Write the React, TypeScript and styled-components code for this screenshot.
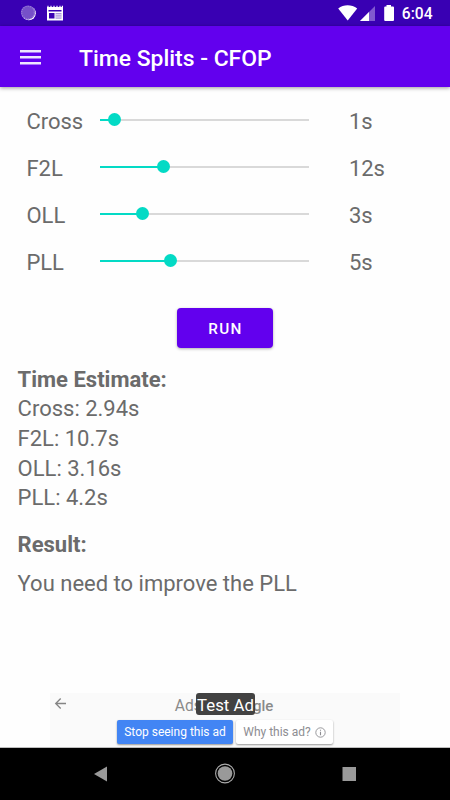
import React from 'react';
import styled, { createGlobalStyle } from 'styled-components';

const GlobalStyle = createGlobalStyle`
  *, *::before, *::after { box-sizing: border-box; }
  body { margin: 0; background: #fff; }
`;

const Screen = styled.div`
  width: 450px;
  height: 800px;
  display: flex;
  flex-direction: column;
  overflow: hidden;
  background: #fefefe;
  color: #6b6b6b;
  font-family: Roboto, "Liberation Sans", sans-serif;
`;

const StatusBar = styled.div`
  flex: none;
  height: 26px;
  display: flex;
  align-items: center;
  justify-content: space-between;
  padding: 0 17.5px 0 20px;
  background: #3900b3;
  color: #fff;
`;

const StatusGroup = styled.div`
  display: flex;
  align-items: center;
  svg { display: block; }
`;

const Clock = styled.span`
  margin-left: 7px;
  font-size: 15.6px;
  font-weight: 500;
  line-height: 26px;
  padding-top: 2px;
`;

const AppBar = styled.header`
  flex: none;
  height: 61px;
  display: flex;
  align-items: center;
  padding: 2px 20px 0;
  background: #6200ee;
  color: #fff;
  box-shadow: 0 1px 4px rgba(0, 0, 0, 0.4);
`;

const MenuButton = styled.button`
  width: 21px;
  height: 16px;
  margin-bottom: 2px;
  padding: 0;
  border: 0;
  background: none;
  svg { display: block; }
`;

const Title = styled.h1`
  margin: 2px 0 0 38px;
  font-size: 22.9px;
  line-height: 28px;
  font-weight: 500;
`;

const Content = styled.main`
  flex: 1;
  display: flex;
  flex-direction: column;
  padding-top: 9px;
`;

const SliderRow = styled.div`
  height: 47px;
  display: grid;
  grid-template-columns: 74px 209px 1fr;
  align-items: center;
  padding-left: 26.4px;
  font-size: 22px;
  line-height: 26px;
`;

const RowText = styled.span<{ $indent?: number }>`
  padding-left: ${(p) => p.$indent ?? 0}px;
  padding-top: 4px;
`;

const Track = styled.div`
  height: 13px;
  display: flex;
  align-items: center;
`;

const Filled = styled.div`
  flex: none;
  height: 2px;
  background: #03dac5;
`;

const Thumb = styled.div`
  flex: none;
  z-index: 1;
  width: 13px;
  height: 13px;
  margin: 0 -6.5px;
  border-radius: 50%;
  background: #03dac5;
`;

const Rest = styled.div`
  flex: 1;
  height: 2px;
  background: #d9d9d9;
`;

const RunButton = styled.button`
  align-self: center;
  width: 96px;
  height: 40px;
  margin-top: 24px;
  padding: 2px 0 0 1px;
  border: 0;
  border-radius: 4px;
  background: #6200ee;
  color: #fff;
  font: 500 15.3px/20px Roboto, sans-serif;
  letter-spacing: 1.37px;
  box-shadow: 0 1px 3px rgba(0, 0, 0, 0.32);
`;

const Report = styled.section`
  padding: 16.8px 17.6px 0;
  font-size: 22px;
  line-height: 29.6px;
`;

const Heading = styled.h2<{ $top?: number }>`
  margin: ${(p) => p.$top ?? 0}px 0 0;
  font-size: 22px;
  line-height: 29.6px;
  font-weight: 700;
`;

const Line = styled.div<{ $top?: number }>`
  margin-top: ${(p) => p.$top ?? 0}px;
`;

const Ad = styled.aside`
  position: relative;
  flex: none;
  align-self: center;
  width: 350px;
  height: 54px;
  margin-top: auto;
  margin-bottom: 1px;
  background: #fafafa;
  color: #8a8a8a;
`;

const BackIcon = styled.svg`
  position: absolute;
  left: 4px;
  top: 4px;
`;

const AdTitle = styled.div`
  display: flex;
  justify-content: center;
  gap: 4px;
  height: 27px;
  padding: 1px 2px 0 0;
  font-size: 15.6px;
  line-height: 24px;
`;

const Brand = styled.span`
  font-size: 15px;
  font-weight: 500;
`;

const TestBadge = styled.div`
  position: absolute;
  left: 146px;
  top: 0;
  width: 59px;
  height: 22px;
  border-radius: 3px;
  background: #424242;
  color: #fff;
  font-size: 16.8px;
  line-height: 24px;
  text-align: center;
  white-space: nowrap;
`;

const AdActions = styled.div`
  display: flex;
  justify-content: center;
  gap: 3px;
`;

const AdButton = styled.button<{ $primary?: boolean }>`
  display: flex;
  align-items: center;
  justify-content: center;
  gap: 4px;
  width: ${(p) => (p.$primary ? 116 : 97)}px;
  height: 24px;
  padding: 0;
  border: 0;
  border-radius: 2px;
  background: ${(p) => (p.$primary ? '#4285f4' : '#fff')};
  color: ${(p) => (p.$primary ? '#fff' : '#8d8d92')};
  font: 400 12px/24px Roboto, sans-serif;
  white-space: nowrap;
  box-shadow: 0 1px 2px rgba(0, 0, 0, 0.4);
`;

const NavBar = styled.nav`
  flex: none;
  height: 52px;
  display: flex;
  justify-content: space-between;
  align-items: center;
  padding: 0 93px;
  background: #000;
  box-shadow: 0 -1px 0 #bdbdbd;
  svg { display: block; }
`;

const sliders = [
  { name: 'Cross', value: '1s', fill: 14 },
  { name: 'F2L', value: '12s', fill: 63 },
  { name: 'OLL', value: '3s', fill: 42 },
  { name: 'PLL', value: '5s', fill: 70 },
];

const estimates = ['Cross: 2.94s', 'F2L: 10.7s', 'OLL: 3.16s', 'PLL: 4.2s'];

export default function App() {
  return (
    <Screen>
      <GlobalStyle />
      <StatusBar>
        <StatusGroup>
          <svg width="44" height="26" viewBox="0 0 44 26">
            <circle cx="8.8" cy="13.3" r="7" fill="#fff" />
            <circle cx="8" cy="12.6" r="7.1" fill="#7650c9" />
            <circle cx="8" cy="12.6" r="6.3" fill="none" stroke="#9c80d8" strokeWidth="1.2" strokeDasharray="1 1.2" />
            <path d="M27 7H43V20.5H27Z" fill="#fff" />
            <path d="M28 5.8V8M31 5.8V8M34 5.8V8M37 5.8V8M40 5.8V8M42.4 5.8V8" stroke="#fff" strokeWidth="1.2" />
            <path d="M28.5 10H41.5V11.5H28.5ZM29 13H34.5V18.5H29Z" fill="#3900b3" />
            <path d="M35.5 13H41.5V18.7H35.5Z" fill="#a993dc" />
            <path d="M35.5 14.8H41.5M35.5 17H41.5" stroke="#fff" strokeWidth=".8" />
          </svg>
        </StatusGroup>
        <StatusGroup>
          <svg width="57" height="26" viewBox="0 0 57 26">
            <path d="M.2 8.4C5.7 4.1 13.5 4.1 19.2 8.4L9.7 20.5Z" fill="#fff" />
            <path d="M37 6V21H22Z" fill="#8059cf" />
            <path d="M31 12V21H22Z" fill="#fff" />
            <path d="M48.5 5H53V6.5H55Q56 6.5 56 7.5V20Q56 21 55 21H47.2Q46.2 21 46.2 20V7.5Q46.2 6.5 47.2 6.5H48.5Z" fill="#fff" />
          </svg>
          <Clock>6:04</Clock>
        </StatusGroup>
      </StatusBar>
      <AppBar>
        <MenuButton aria-label="Menu">
          <svg width="21" height="16" viewBox="0 0 21 16" fill="#eee5ff">
            <path d="M0 1H21V3.4H0ZM0 7H21V9.4H0ZM0 13H21V15.4H0Z" />
          </svg>
        </MenuButton>
        <Title>Time Splits - CFOP</Title>
      </AppBar>
      <Content>
        {sliders.map((s) => (
          <SliderRow key={s.name}>
            <RowText>{s.name}</RowText>
            <Track>
              <Filled style={{ width: s.fill }} />
              <Thumb />
              <Rest />
            </Track>
            <RowText $indent={39.5}>{s.value}</RowText>
          </SliderRow>
        ))}
        <RunButton>RUN</RunButton>
        <Report>
          <Heading>Time Estimate:</Heading>
          {estimates.map((e) => (
            <Line key={e}>{e}</Line>
          ))}
          <Heading $top={17.4}>Result:</Heading>
          <Line $top={9}>You need to improve the PLL</Line>
        </Report>
        <Ad>
          <BackIcon width="14" height="13" viewBox="0 0 14 13" fill="none" stroke="#858585" strokeWidth="1.3">
            <path d="M12 6.5H1.7M6.7 1.5L1.7 6.5L6.7 11.5" />
          </BackIcon>
          <AdTitle>
            <span>Ads by</span>
            <Brand>Google</Brand>
          </AdTitle>
          <AdActions>
            <AdButton $primary>Stop seeing this ad</AdButton>
            <AdButton>
              Why this ad?
              <svg width="11" height="11" viewBox="0 0 11 11" fill="none" stroke="#8d8d92">
                <circle cx="5.5" cy="5.5" r="4.7" strokeWidth=".9" />
                <path d="M5.5 4.8V8.2M5.5 2.7V3.8" strokeWidth="1.1" />
              </svg>
            </AdButton>
          </AdActions>
          <TestBadge>Test Ad</TestBadge>
        </Ad>
      </Content>
      <NavBar>
        <svg width="15" height="52" viewBox="0 0 15 52">
          <path d="M1 26L14 18.5V33.5Z" fill="#999" />
        </svg>
        <svg width="22" height="52" viewBox="0 0 22 52">
          <circle cx="11" cy="25.5" r="9.4" fill="none" stroke="#aaa" strokeWidth="1.1" />
          <circle cx="11" cy="25.5" r="7.3" fill="#999" />
        </svg>
        <svg width="15" height="52" viewBox="0 0 15 52">
          <rect x=".5" y="19" width="13.5" height="14" fill="#999" />
        </svg>
      </NavBar>
    </Screen>
  );
}
